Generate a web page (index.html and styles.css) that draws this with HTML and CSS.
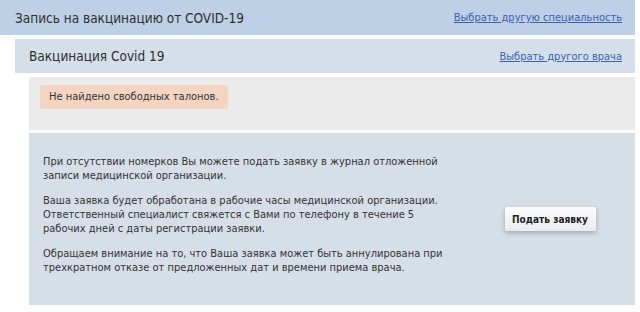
FILE: index.html
```html
<!DOCTYPE html>
<html>
<head>
    <title>Запись на вакцинацию</title>
    <link rel="stylesheet" href="styles.css">
</head>
<body>
    <div class="page">
        <div class="page-header">
            <h1>Запись на вакцинацию от COVID-19</h1>
            <a href="#">Выбрать другую специальность</a>
        </div>

        <div class="section">
            <div class="section-header">
                <h2>Вакцинация Covid 19</h2>
                <a href="#">Выбрать другого врача</a>
            </div>

            <div class="empty">
                <div class="alert">Не найдено свободных талонов.</div>
            </div>

            <div class="request">
                <div class="request-text">
                    <p>При отсутствии номерков Вы можете подать заявку в журнал отложенной записи медицинской организации.</p>
                    <p>Ваша заявка будет обработана в рабочие часы медицинской организации. Ответственный специалист свяжется с Вами по телефону в течение 5 рабочих дней с даты регистрации заявки.</p>
                    <p>Обращаем внимание на то, что Ваша заявка может быть аннулирована при трехкратном отказе от предложенных дат и времени приема врача.</p>
                </div>
                <div class="request-action">
                    <button>Подать заявку</button>
                </div>
            </div>
        </div>
    </div>
</body>
</html>
```

FILE: styles.css
```css
body {
    margin: 0;
    background: #fff;
    font-family: 'DejaVu Sans Condensed', 'DejaVu Sans', sans-serif;
    color: #333;
}

.page {
    width: 635px;
}

a {
    color: #3a62b0;
    font-size: 11px;
}

.page-header {
    display: flex;
    align-items: center;
    justify-content: space-between;
    height: 35px;
    padding: 0 13px 0 15px;
    background: #bdd0e5;
}

h1 {
    margin: 0;
    font-size: 13.5px;
    font-weight: normal;
    color: #2f2f2f;
}

.section {
    margin: 4px 0 0 15px;
}

.section-header {
    display: flex;
    align-items: center;
    justify-content: space-between;
    height: 34px;
    padding: 0 13px 0 14px;
    background: #d5dfea;
}

h2 {
    margin: 0;
    font-size: 13.5px;
    font-weight: normal;
    color: #2f2f2f;
}

.empty {
    height: 53px;
    margin: 4px 0 0 14px;
    padding: 8px 11px 0;
    box-sizing: border-box;
    background: #ebebeb;
}

.alert {
    display: inline-block;
    height: 24px;
    padding: 0 9px;
    border-radius: 3px;
    background: #f4d5c3;
    font-size: 11px;
    line-height: 24px;
}

.request {
    display: flex;
    align-items: center;
    height: 172px;
    margin: 3px 0 0 14px;
    padding: 0 14px;
    box-sizing: border-box;
    background: #d6dfe8;
}

.request-text {
    width: 400px;
    padding-bottom: 8px;
    font-size: 11px;
    line-height: 14px;
}

.request-text p {
    margin: 0 0 11px;
}

.request-text p:last-child {
    margin-bottom: 0;
}

.request-action {
    flex: 1;
    display: flex;
    justify-content: center;
    padding-left: 36px;
}

button {
    width: 91px;
    height: 24px;
    padding: 0;
    border: none;
    border-radius: 2px;
    background: linear-gradient(#fdfdfe, #e9ecf1);
    box-shadow: 0 2px 5px rgba(0,0,0,0.25);
    font-family: inherit;
    font-size: 10px;
    font-weight: bold;
    color: #222;
    cursor: pointer;
}
```
